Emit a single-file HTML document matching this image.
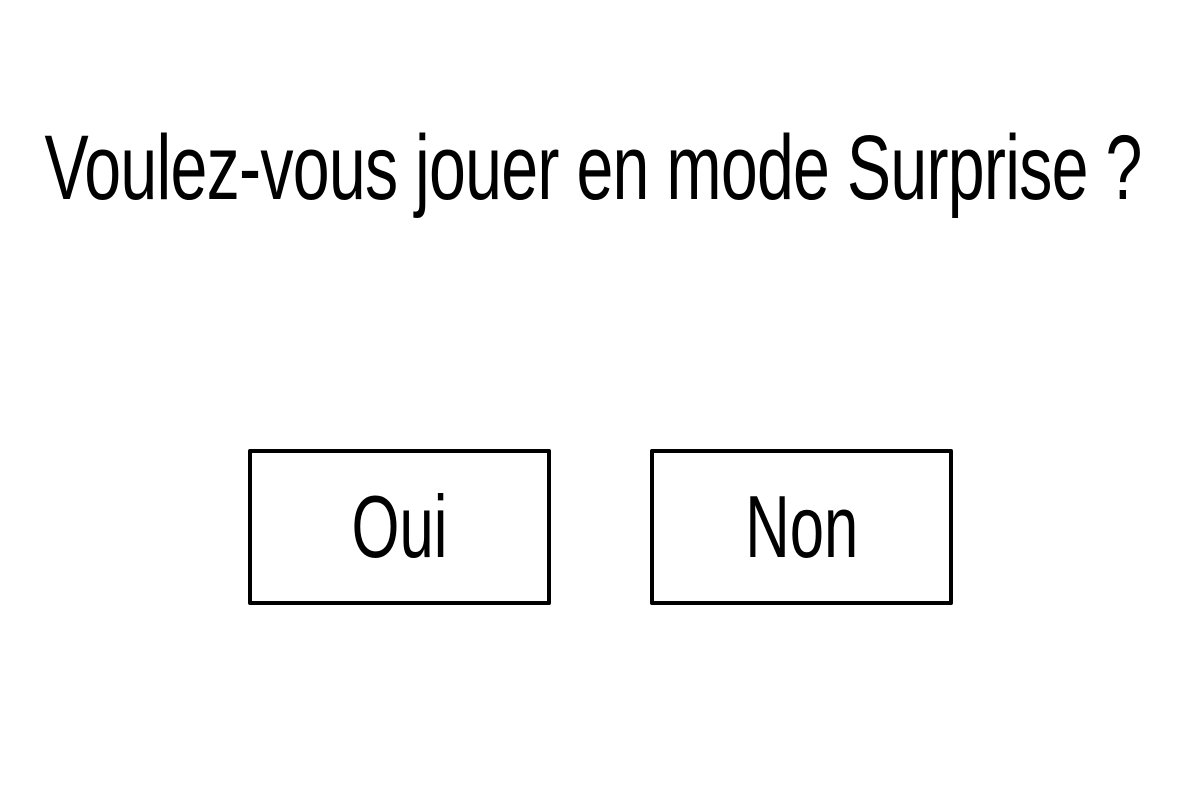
<!DOCTYPE html>
<html><head><meta charset="utf-8"><style>
html,body{margin:0;padding:0;background:#fff;width:1200px;height:800px;overflow:hidden;font-family:"Liberation Sans",sans-serif;color:#000}
.t{position:absolute;left:593px;top:118px;white-space:nowrap;font-size:92px;line-height:100px;transform-origin:0 0;transform:scaleX(0.72) translateX(-50%);letter-spacing:-1px}
.b{position:absolute;top:449px;width:295px;height:148px;border:4px solid #000;border-radius:2px;text-align:center;line-height:148px}
.b span{display:inline-block;font-size:88px;transform:scaleX(0.7)}
</style></head><body>
<div class="t">Voulez-vous jouer en mode Surprise ?</div>
<div class="b" style="left:248px"><span>Oui</span></div>
<div class="b" style="left:650px"><span>Non</span></div>
</body></html>
